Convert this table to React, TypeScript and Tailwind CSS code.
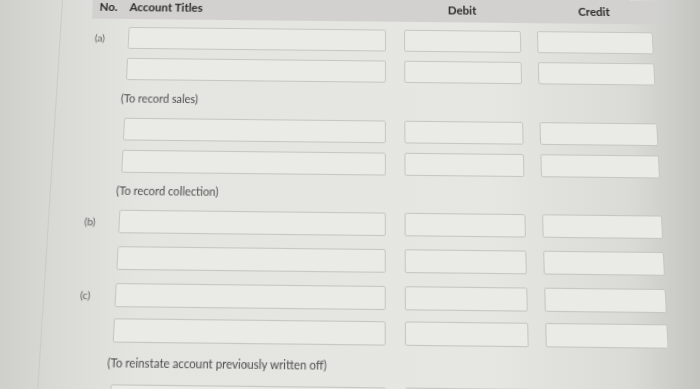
import React from "react";

type Row = { label?: string; mt: string };

function Field({ w, ml }: { w: string; ml?: string }) {
  return (
    <div
      className={`${w} ${ml ?? ""} h-[22px] shrink-0 rounded-[2px] border border-[#c6c6c2] bg-[#eaeae7]`}
    />
  );
}

function EntryRow({ label, mt }: Row) {
  return (
    <div className={`flex items-center ${mt}`}>
      <div className="w-[37px] shrink-0 pl-[4px] text-[10px] text-[#606060]">{label ?? ""}</div>
      <Field w="w-[256px]" />
      <Field w="w-[116px]" ml="ml-[18px]" />
      <Field w="w-[115px]" ml="ml-[16px]" />
    </div>
  );
}

function Note({ text, h }: { text: string; h: string }) {
  return (
    <div className={`flex items-center ${h} pl-[33px] text-[10.8px] text-[#4e4e4e]`}>{text}</div>
  );
}

export default function App() {
  return (
    <div className="relative h-[389px] w-[700px] overflow-hidden bg-[linear-gradient(90deg,#cfcfcb_0%,#d9d9d5_8%,#e4e4e0_20%,#e6e6e2_70%,#dadad6_90%,#c4c4c0_100%)] font-[Lato,sans-serif]">
      <div className="flex h-[440px] w-[700px] origin-[390px_0px] [transform:perspective(1000px)_rotateX(11deg)_skewY(0.6deg)]">
        {/* side rail */}
        <div className="h-full w-[63px] shrink-0 border-r border-[#cacac6]" />

        {/* journal entry form */}
        <div className="flex flex-col pl-[30px]">
          <div className="-mt-[2px] flex h-[24px] w-[566px] items-center bg-[#d2d1cf] text-[11.5px] font-bold text-[#2b2b2b]">
            <div className="w-[37px] shrink-0 pl-[7px]">No.</div>
            <div className="w-[256px] shrink-0">Account Titles</div>
            <div className="ml-[18px] w-[116px] shrink-0 text-center">Debit</div>
            <div className="ml-[16px] w-[115px] shrink-0 text-center">Credit</div>
          </div>

          <EntryRow label="(a)" mt="mt-[8px]" />
          <EntryRow mt="mt-[9px]" />
          <Note text="(To record sales)" h="h-[37px]" />
          <EntryRow mt="mt-0" />
          <EntryRow mt="mt-[9px]" />
          <Note text="(To record collection)" h="h-[35px]" />
          <EntryRow label="(b)" mt="mt-0" />
          <EntryRow mt="mt-[12px]" />
          <EntryRow label="(c)" mt="mt-[12px]" />
          <EntryRow mt="mt-[10px]" />
          <Note text="(To reinstate account previously written off)" h="h-[37px]" />
          <EntryRow mt="mt-0" />
        </div>
      </div>
    </div>
  );
}
